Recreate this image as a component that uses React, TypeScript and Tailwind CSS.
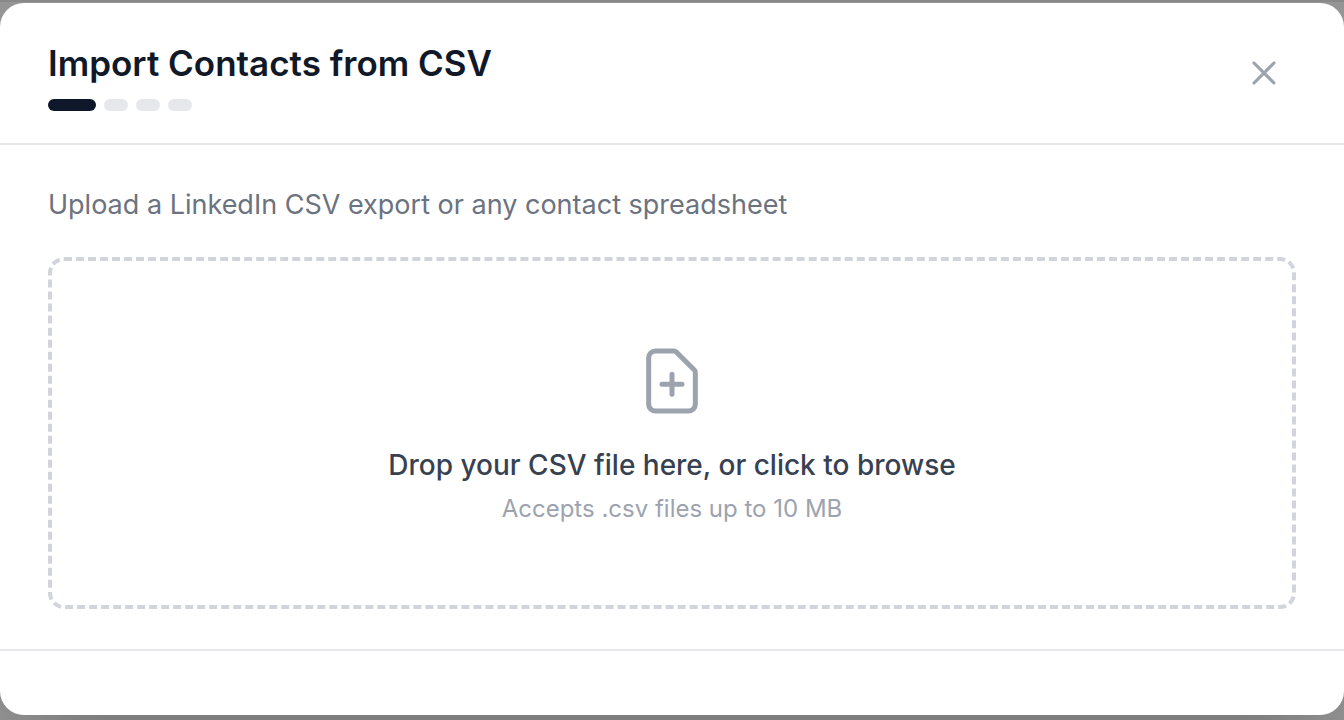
import React, { useState } from 'react';
import { X } from 'lucide-react';

const STEPS = ['upload', 'map', 'review', 'done'];

const StepDots: React.FC<{ current: number }> = ({ current }) => (
  <div className="mt-2 flex gap-2">
    {STEPS.map((step, i) => (
      <span
        key={step}
        className={i === current ? 'h-3 w-12 rounded-full bg-[#0f172a]' : 'h-3 w-6 rounded-full bg-[#e5e7eb]'}
      />
    ))}
  </div>
);

const FilePlusIcon: React.FC = () => (
  <svg className="h-20 w-20 text-[#9ca3af]" viewBox="0 0 24 24" fill="none" stroke="currentColor" strokeWidth={1.5} aria-hidden="true">
    <path
      strokeLinecap="round"
      strokeLinejoin="round"
      d="M9 13h6m-3-3v6m5 5H7a2 2 0 01-2-2V5a2 2 0 012-2h5.586a1 1 0 01.707.293l5.414 5.414a1 1 0 01.293.707V19a2 2 0 01-2 2z"
    />
  </svg>
);

const App: React.FC = () => {
  const [step, setStep] = useState(0);

  const handleFile = (e: React.ChangeEvent<HTMLInputElement>) => {
    if (e.target.files?.length) setStep(1);
  };

  return (
    <div className="min-h-screen overflow-hidden border-t-2 border-[#888888] bg-[#979797] pt-px pb-[5px] font-[Inter,sans-serif]">
      <div
        role="dialog"
        aria-labelledby="import-title"
        className="w-full rounded-3xl bg-white shadow-[0_50px_100px_-24px_rgba(0,0,0,0.25)]"
      >
        {/* Header */}
        <div className="flex items-center justify-between border-b-2 border-[#e5e7eb] px-12 py-8">
          <div>
            <h2 id="import-title" className="text-[35px] leading-[56px] font-semibold text-[#111827]">
              Import Contacts from CSV
            </h2>
            <StepDots current={step} />
          </div>
          <button type="button" aria-label="Close" className="rounded-2xl p-3 text-[#9ca3af] hover:bg-gray-100">
            <X size={40} strokeWidth={1.9} />
          </button>
        </div>

        {/* Body */}
        <div className="px-12 py-10">
          <p className="mb-8 text-[27px] leading-10 text-[#6b7280]">
            Upload a LinkedIn CSV export or any contact spreadsheet
          </p>
          <label
            htmlFor="csv-file"
            className="flex cursor-pointer flex-col items-center rounded-2xl border-4 border-dashed border-[#d1d5db] p-20 text-center hover:border-gray-400"
          >
            <FilePlusIcon />
            <span className="mt-6 text-[28px] leading-10 font-medium text-[#374151]">
              Drop your CSV file here, or click to browse
            </span>
            <span className="mt-2 text-2xl leading-8 text-[#9ca3af]">Accepts .csv files up to 10 MB</span>
            <input id="csv-file" type="file" accept=".csv" className="sr-only" onChange={handleFile} />
          </label>
        </div>

        {/* Footer */}
        <div className="border-t-2 border-[#e5e7eb] py-8" />
      </div>
    </div>
  );
};

export default App;
